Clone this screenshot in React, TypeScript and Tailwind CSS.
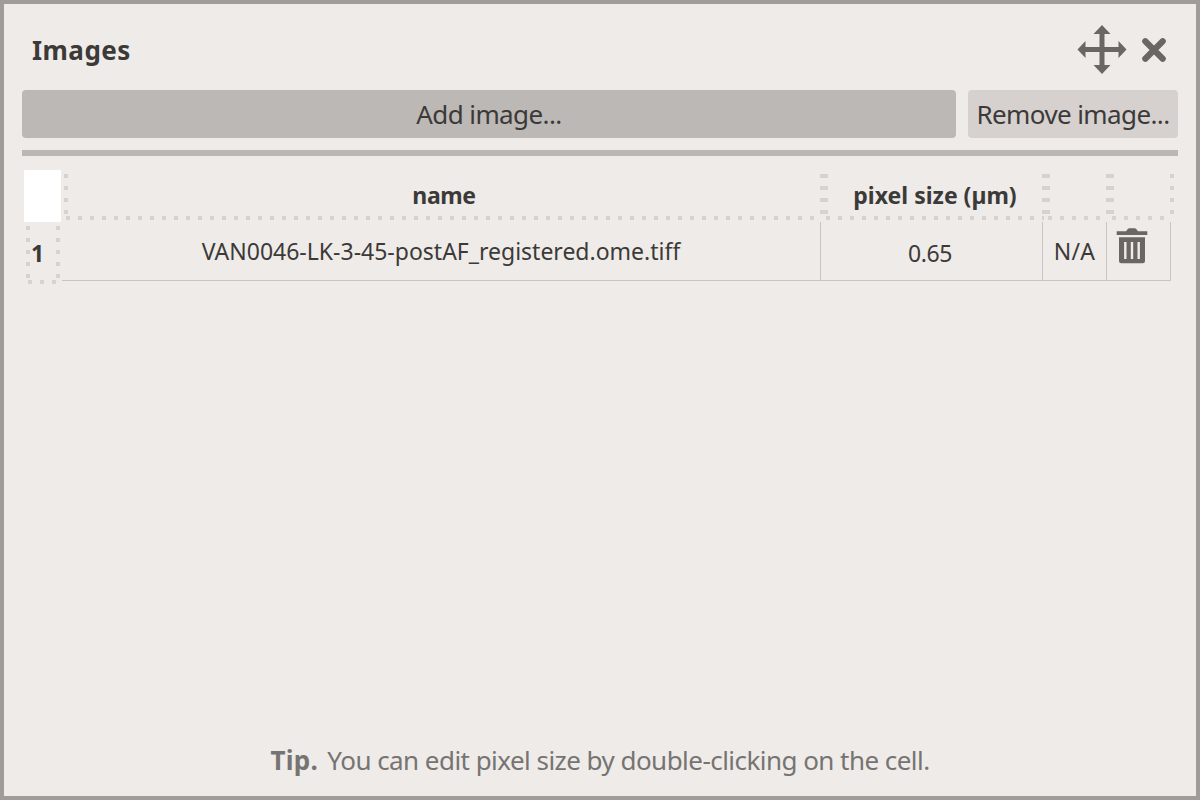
import React from "react";

const dotsDown =
  "w-1 shrink-0 bg-[repeating-linear-gradient(to_bottom,#d6d2cf_0_4px,transparent_4px_12px)]";
const dotsAcross =
  "h-1 shrink-0 bg-[repeating-linear-gradient(to_right,#d6d2cf_0_4px,transparent_4px_12px)]";

function HeaderCell({ width, children }: { width: string; children?: React.ReactNode }) {
  return (
    <div className={`flex h-[52px] shrink-0 flex-col pt-1 ${width}`}>
      <div className="flex h-[42px]">
        <div className={dotsDown} />
        <div className="flex flex-1 items-center justify-center whitespace-nowrap font-bold">
          {children}
        </div>
        <div className={dotsDown} />
      </div>
      <div className={`mx-0.5 ${dotsAcross}`} />
    </div>
  );
}

function MoveIcon() {
  return (
    <svg width="50" height="50" viewBox="0 0 50 50" fill="#6b6663">
      <path d="M25 0 33.500 9H27.500V22H41.500V16L49.500 24.500 41.500 33V27H27.500V40H33.500L25 49 16.500 40H22.500V27H8.500V33L.5 24.500 8.500 16V22H22.500V9H16.500Z" />
    </svg>
  );
}

function CloseIcon() {
  return (
    <svg width="26" height="26" viewBox="0 0 26 26" fill="none" stroke="#6b6663" strokeWidth="6.2" strokeLinecap="round">
      <path d="M4.300 4.300 21.700 21.700M21.700 4.300 4.300 21.700" />
    </svg>
  );
}

function TrashIcon() {
  return (
    <svg width="32" height="36" viewBox="0 0 32 36">
      <path fill="#6b6663" d="M.7 3.300H10L12 .8Q12.500 .2 13.200 .2H18.800Q19.500 .2 20 .8L22 3.300H31.300V7H.7Z" />
      <path fill="#6b6663" d="M3 9.300H29V33Q29 35.200 26.800 35.200H5.200Q3 35.200 3 33Z" />
      <path stroke="#efebe8" strokeWidth="2.400" d="M9.300 14V31M16 14V31M22.700 14V31" />
    </svg>
  );
}

export default function App() {
  return (
    <div className="flex h-[800px] w-[1200px] flex-col border-4 border-[#a19c98] bg-[#efebe8] px-[18px] font-['Noto_Sans','Open_Sans',sans-serif] text-[#3b3a38]">
      <header className="flex h-[86px] shrink-0 items-center pl-[10px] pr-[11px] pt-1.5">
        <h1 className="text-[26px] font-bold leading-8 tracking-[0.45px]">Images</h1>
        <div className="ml-auto flex items-center gap-[14px]">
          <MoveIcon />
          <CloseIcon />
        </div>
      </header>

      <div className="flex h-12 shrink-0 gap-3 text-[26px] tracking-[-0.6px]">
        <button className="flex-1 rounded bg-[#bcb8b5] leading-[48px]">Add image...</button>
        <button className="w-[210px] whitespace-nowrap rounded bg-[#d6d1cf] leading-[48px]">Remove image...</button>
      </div>
      <div className="mt-3 h-1.5 shrink-0 bg-[#bcb7b4]" />

      <section className="ml-0.5 mt-[14px] text-[23px]">
        <div className="flex">
          <div className="mr-[3px] h-[52px] w-[37px] shrink-0 bg-white" />
          <HeaderCell width="w-[760px]"><span className="tracking-[-0.4px]">name</span></HeaderCell>
          <HeaderCell width="w-[222px]"><span>pixel size (µm)</span></HeaderCell>
          <HeaderCell width="w-[64px]" />
          <HeaderCell width="w-[64px]" />
        </div>
        <div className="flex">
          <div className="flex h-[62px] w-[38px] shrink-0 flex-col pl-0.5 pr-0.5 pt-1">
            <div className="flex h-[54px]">
              <div className={dotsDown} />
              <div className="flex flex-1 items-center pl-px font-bold"><span>1</span></div>
              <div className={dotsDown} />
            </div>
            <div className={`mx-0.5 ${dotsAcross}`} />
          </div>
          <div className="flex h-[59px] w-[759px] items-center justify-center border-b border-r border-[#c9c4c1]">
            <span>VAN0046-LK-3-45-postAF_registered.ome.tiff</span>
          </div>
          <div className="flex h-[59px] w-[222px] items-center justify-center border-b border-r border-[#c9c4c1] pr-[3px] pt-1">
            <span className="tracking-[-0.4px]">0.65</span>
          </div>
          <div className="flex h-[59px] w-[64px] items-center justify-center border-b border-r border-[#c9c4c1]">
            <span className="tracking-[0.3px]">N/A</span>
          </div>
          <div className="flex h-[59px] w-[64px] border-b border-r border-[#c9c4c1] pl-[9px] pt-[6px]">
            <TrashIcon />
          </div>
        </div>
      </section>

      <p className="mb-4 mt-auto text-center text-[26px] leading-10 tracking-[-0.54px] text-[#767472]">
        <b className="mr-[3px] tracking-[0.3px]">Tip.</b> You can edit pixel size by double-clicking on the cell.
      </p>
    </div>
  );
}
